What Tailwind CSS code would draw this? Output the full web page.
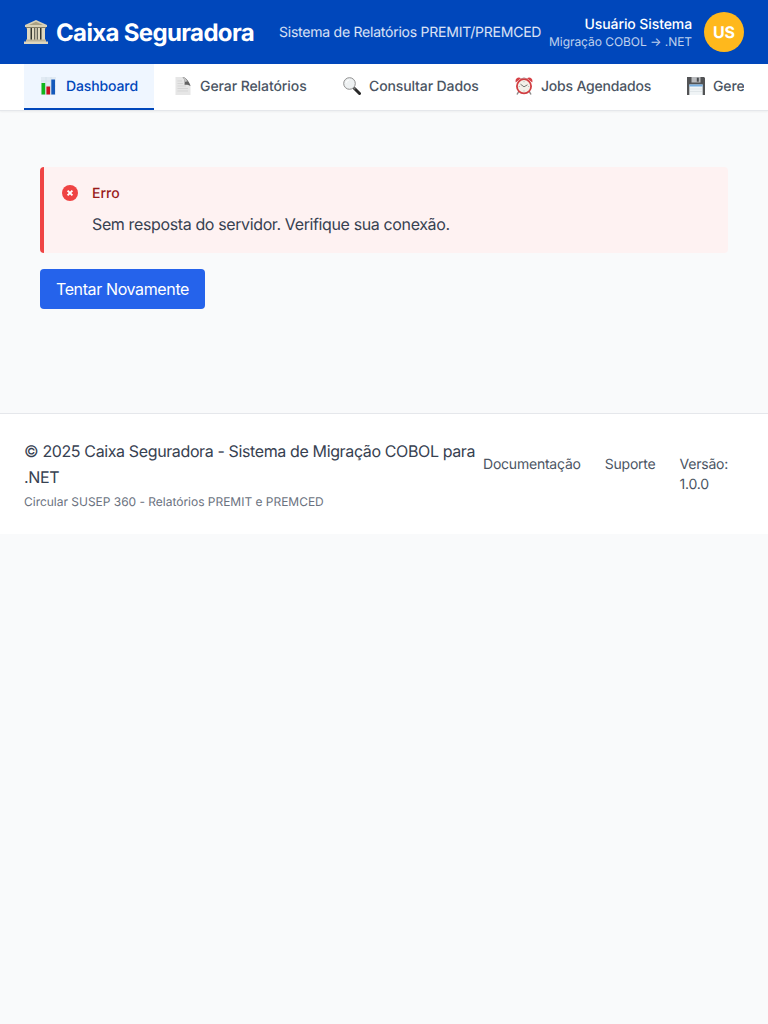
<!DOCTYPE html>
<html lang="pt-BR">
<head>
<meta charset="utf-8">
<title>Caixa Seguradora</title>
<script src="https://cdn.jsdelivr.net/npm/@tailwindcss/browser@4"></script>
</head>
<body class="bg-[#f9fafb] font-['Inter',sans-serif] text-[#374151] text-base min-h-screen overflow-x-hidden antialiased [text-rendering:geometricPrecision]">
<header class="bg-[#0047bb] h-16 px-6 flex items-center justify-between text-white">
  <div class="flex items-center whitespace-nowrap">
    <svg class="w-6 h-6 mr-2 shrink-0" viewBox="0 0 24 24">
      <path d="M12 0 23 5v2H1V5z" fill="#d9d2b8"/><path d="M12 1.8 19 5H5z" fill="#aaa184"/>
      <path d="M2 7h20v1.5H2z" fill="#817b66"/><path d="M3 8h18v12H3z" fill="#33352f"/>
      <path d="M3 8h3.5v12H3zM8 8h2.3v12H8zM13.7 8H16v12h-2.3zM17.5 8H21v12h-3.5zM11.2 8h1.6v12h-1.6z" fill="#e0d9c0"/>
      <path d="M2 19.5h20V22H2z" fill="#bdb49a"/><path d="M0 21.5h24V24H0z" fill="#ded6bd"/>
    </svg>
    <span class="w-[223px] pt-0.5 text-2xl font-bold tracking-[-0.65px]">Caixa Seguradora</span>
    <span class="text-sm pt-0.5 text-white/85 w-[262px] tracking-[-0.235px]">Sistema de Relatórios PREMIT/PREMCED</span>
  </div>
  <div class="flex items-center gap-3">
    <div class="text-right whitespace-nowrap">
      <div class="text-sm leading-5 pt-px -mb-px font-medium tracking-[-0.1px]">Usuário Sistema</div>
      <div class="text-xs leading-4 text-white/75 tracking-[-0.05px]">Migração COBOL → .NET</div>
    </div>
    <div class="size-10 shrink-0 rounded-full bg-[#ffb81c] flex items-center justify-center font-bold">US</div>
  </div>
</header>
<nav class="h-[47px] bg-white border-b border-gray-200 shadow-[0_1px_2px_rgba(0,0,0,0.05)] px-6">
  <div class="h-full flex gap-1 overflow-hidden whitespace-nowrap text-sm font-medium text-[#4b5563] tracking-[-0.12px]">
    <a class="shrink-0 w-[130px] h-full pl-4 flex items-center gap-2 bg-[#eff6ff] text-[#0047bb] border-b-2 border-[#0047bb]">
      <svg class="w-[18px] h-[18px] mb-px shrink-0" viewBox="0 0 18 18"><path d="M1 0h15v18H1z" fill="#e1eaf3"/><path d="M1 4h15M1 9h15M1 14h15M6 0v18M11 0v18" stroke="#cbd8e4" stroke-width=".5"/><path d="M1.5 6h3.7v11.5H1.5z" fill="#10b51c"/><path d="M6.4 9.5h3.7v8H6.4z" fill="#c91020"/><path d="M11.3 2.5H15v15h-3.7z" fill="#1459bb"/></svg>
      <span class="pt-px">Dashboard</span></a>
    <a class="shrink-0 w-[165px] pl-4 pb-0.5 flex items-center gap-2">
      <svg class="w-[18px] h-[18px] mb-px shrink-0" viewBox="0 0 18 18"><path d="M1.5 0h9L16.5 8v10h-15z" fill="#e6e6e6"/><path d="M8.5 0c3.3.2 7.5 5.8 8 9-2-1.3-4-1.5-6-1.2C11 4.5 10.5 2 8.5 0" fill="#626262"/><path d="M8.5 0c2.8.8 4.5 3 5 5-1.3-.7-2-.5-3 .4C10.6 3 10 1.5 8.5 0" fill="#c6c6c6"/><path d="M3.5 4H8M3.5 6.5H9M3.5 9H12M3.5 11.5H14M3.5 14H14" stroke="#cdcdcd" stroke-width=".7"/></svg>
      <span class="pt-px tracking-[-0.08px]">Gerar Relatórios</span></a>
    <a class="shrink-0 w-[168px] pl-4 pb-0.5 flex items-center gap-2">
      <svg class="w-[18px] h-[18px] mb-px shrink-0" viewBox="0 0 18 18"><path d="m11.5 11.5 5 5" stroke="#292929" stroke-width="3" stroke-linecap="round"/><path d="m10.3 10.3 2 2" stroke="#777" stroke-width="1.5"/><circle cx="6.5" cy="6.5" r="5.8" fill="#eef1f2" stroke="#8d8d8d" stroke-width="1"/><path d="M3 6a4 4 0 0 1 3-3" stroke="#fff" fill="none"/></svg>
      <span class="pt-px">Consultar Dados</span></a>
    <a class="shrink-0 w-[168px] pl-4 pb-0.5 flex items-center gap-2">
      <svg class="w-[18px] h-[18px] mb-px shrink-0" viewBox="0 0 18 18"><path d="m4 14-2 3.5M14 14l2 3.5" stroke="#888" stroke-width="1.5"/><path d="M.8 5.5C-.5 2 3 -.8 6 1.2zM17.2 5.5c1.3-3.5-2.2-6.3-5.2-4.3z" fill="#d64046"/><path d="M6 2Q9-.5 12 2" stroke="#aaa" fill="none"/><circle cx="9" cy="9.3" r="7.1" fill="#f3f0e8" stroke="#d13e42" stroke-width="1.8"/><path d="m5.5 7.2 3.5 2.6 3.5-2" stroke="#555" stroke-width=".8" fill="none"/><path d="M9 4.2v1M9 13.5v1M3.8 9.5h1M13.2 9.5h1" stroke="#999" stroke-width=".7"/></svg>
      <span class="pt-px tracking-[-0.2px]">Jobs Agendados</span></a>
    <a class="shrink-0 w-[73px] pl-4 pb-0.5 flex items-center gap-2">
      <svg class="w-[18px] h-[18px] mb-px shrink-0" viewBox="0 0 18 18"><path d="M0 0h17l1 1v17H0z" fill="#525355"/><path d="M4.5 0h9v5.5h-9z" fill="#b8babd"/><path d="M9.8.7h2v4h-2z" fill="#484b4e"/><path d="M2.3 7.5h13.4V18H2.3z" fill="#f0f4f6"/><path d="M2.3 7.5h13.4v2H2.3z" fill="#77aee0"/><path d="M3 12h12M3 14.5h12" stroke="#d5dce1" stroke-width=".6"/></svg>
      <span class="pt-px">Gere</span></a>
  </div>
</nav>
<main class="px-10 pt-14 h-[302px]">
  <div class="h-[86px] bg-[#fef2f2] border-l-4 border-[#ef4444] rounded-[4px] pl-[18px] pt-4 flex gap-3.5">
    <svg class="w-4 h-4 mt-0.5 shrink-0" viewBox="0 0 16 16"><circle cx="8" cy="8" r="8" fill="#ef4444"/><path d="m5.6 5.6 4.8 4.8m0-4.8-4.8 4.8" stroke="#fff" stroke-width="2"/></svg>
    <div><h3 class="pt-px text-sm leading-5 font-medium text-[#991b1b]">Erro</h3><p class="mt-[7px] leading-[26px] tracking-[-0.375px]">Sem resposta do servidor. Verifique sua conexão.</p></div>
  </div>
  <button class="mt-4 w-[165px] h-10 rounded-[4px] bg-[#2563eb] text-white whitespace-nowrap tracking-[-0.375px]">Tentar Novamente</button>
</main>
<footer class="h-[121px] bg-white border-t border-gray-200 px-6 pt-[25px] flex">
  <div class="w-[459px] shrink-0">
    <p class="leading-[25.6px] whitespace-nowrap tracking-[-0.375px]">© 2025 Caixa Seguradora - Sistema de Migração COBOL para<br>.NET</p>
    <p class="mt-1 text-xs leading-4 text-[#6b7280] tracking-[-0.02px]">Circular SUSEP 360 - Relatórios PREMIT e PREMCED</p>
  </div>
  <div class="flex gap-6 pt-4 text-sm leading-5 text-[#4b5563] tracking-[-0.22px]"><a>Documentação</a><a>Suporte</a><span>Versão:<br>1.0.0</span></div>
</footer>
</body>
</html>
